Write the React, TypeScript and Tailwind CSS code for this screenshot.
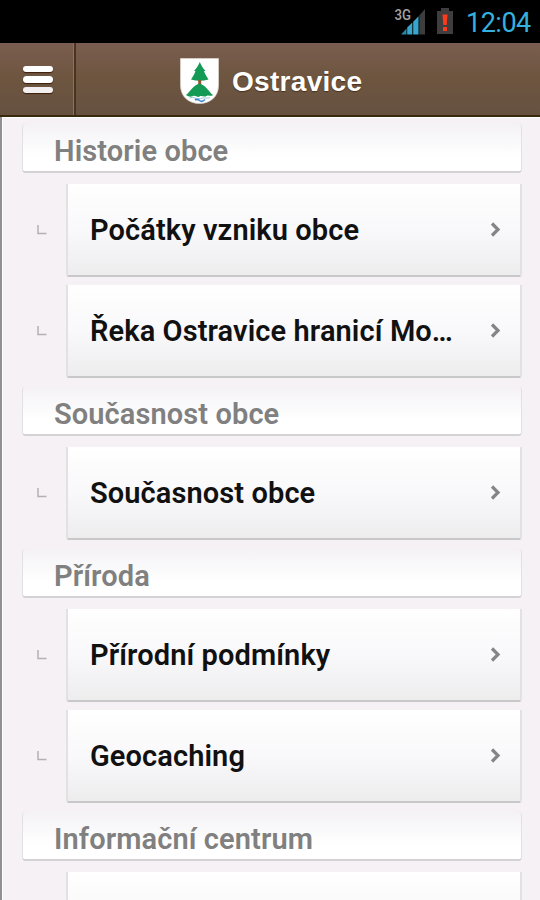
type Section = { title: string; items: string[] };

const sections: Section[] = [
  { title: "Historie obce", items: ["Počátky vzniku obce", "Řeka Ostravice hranicí Mo…"] },
  { title: "Současnost obce", items: ["Současnost obce"] },
  { title: "Příroda", items: ["Přírodní podmínky", "Geocaching"] },
  { title: "Informační centrum", items: [""] },
];

function StatusBar() {
  return (
    <div className="flex h-[43px] shrink-0 items-start justify-end bg-black pr-[9px]">
      <svg className="mt-[7px] h-[29px] w-[34px]" viewBox="0 0 34 29">
        <text x="0.5" y="12.5" fontSize="15" fontWeight="500" textLength="16.5" lengthAdjust="spacingAndGlyphs" fill="#a3a3a3" className="font-['Roboto',sans-serif]">3G</text>
        <path d="M7 27.5 12.5 21.5V27.5Z" fill="#2786a8" />
        <path d="M13.2 20.5 18.3 15.5V27.5H13.2Z" fill="#38a5cc" />
        <path d="M19.2 14.7 24.5 9.3V27.5H19.2Z" fill="#38a5cc" />
        <path d="M25.3 8.5 31 2V27.5H25.3Z" fill="#3d3d3d" />
      </svg>
      <svg className="ml-[8px] mt-[7px] h-[28px] w-[18px]" viewBox="0 0 18 28">
        <path d="M5 1H13V4H17V27H1V4H5Z" fill="#3f3d3d" />
        <path d="M6.5 7.5H11.5L10.7 18H7.3ZM7 20H11V24H7Z" fill="#fa3b1d" />
      </svg>
      <span className="ml-[12px] mt-[5px] w-[65px] whitespace-nowrap font-['Roboto',sans-serif] text-[27px] leading-[37px] tracking-[-0.5px] text-[#35b1df]">12:04</span>
    </div>
  );
}

function Crest() {
  return (
    <svg className="h-[47px] w-[40px]" viewBox="0 0 40 47">
      <path d="M.5.5H38.5V27C38.5 39 30 45.5 19.5 45.5S.5 39 .5 27Z" fill="#fff" stroke="#dad2cc" strokeWidth=".8" />
      <path d="M19.8 4C21.5 8 23 10 25.5 13H24C25 16 26.5 18.5 28.5 21.5Q20 24 11 21.5C13 18.5 14.5 16 15.5 13H14C16.5 10 18 8 19.8 4Z" fill="#149a55" />
      <path d="M18.2 22H21.2V28H18.2Z" fill="#8a5635" />
      <path d="M6 37C11 33 14 26 19.5 26S28 33 33 37C30.5 39 29 36.5 26.5 38S21.5 37 19.5 38.5 15.5 37 13 38 9 39 6 37Z" fill="#149a55" />
      <path d="M9.5 40Q12.5 38.5 15 40T20.5 40.5 26 40 30 39.5" fill="none" stroke="#9bc5df" strokeWidth="1" />
      <path d="M15 42Q17 40.5 19.5 42.5T25 41.5" fill="none" stroke="#3c85cb" strokeWidth="1.6" />
    </svg>
  );
}

function Header() {
  return (
    <header className="flex h-[74px] shrink-0 border-b-2 border-[#3a2a0d] bg-linear-to-b from-[#7a5d4f] via-[#6d553f] to-[#665141]">
      <button className="flex w-[76px] items-center justify-center border-r-2 border-[#49341f] pl-[2px] pt-px shadow-[inset_-1px_0_0_#8b735d]">
        <span className="flex flex-col gap-[4px]">
          <span className="h-[6.5px] w-[30px] rounded-full bg-white shadow-[0_1px_1px_#3d1e08]" />
          <span className="h-[6.5px] w-[30px] rounded-full bg-white shadow-[0_1px_1px_#3d1e08]" />
          <span className="h-[6.5px] w-[30px] rounded-full bg-[#f3eff0] shadow-[0_1px_1px_#3d1e08]" />
        </span>
      </button>
      <div className="flex items-start pl-[104px] pt-[15px]">
        <Crest />
        <h1 className="ml-[12px] mt-[8px] whitespace-nowrap font-['Liberation_Sans',sans-serif] text-[28px] font-bold leading-[32px] tracking-[0.3px] text-white [text-shadow:0_1px_1px_#49301c]">Ostravice</h1>
      </div>
    </header>
  );
}

function Item({ label }: { label: string }) {
  return (
    <li className="flex h-[101px] items-start">
      <svg className="ml-[35px] mt-[41px] h-[10px] w-[10px] shrink-0" viewBox="0 0 10 10">
        <path d="M1 0V8.5H9.5" fill="none" stroke="#b4b1b3" strokeWidth="1.5" />
      </svg>
      <div className="ml-[19px] flex h-[93px] w-[456px] items-center rounded-b-[3px] border-x-2 border-b-2 border-x-[#e3e1e4] border-b-[#c9c8c9] bg-linear-to-b from-white via-[#f9f8fa] to-[#eeedee] pl-[22px] pr-[18px]">
        <span className="whitespace-nowrap font-['Roboto',sans-serif] text-[29px] font-semibold leading-[40px] tracking-[0.1px] text-[#111]">{label}</span>
        <svg className="ml-auto h-[16px] w-[12px]" viewBox="0 0 12 16">
          <path d="M2 1.5 8 7.5 2 13.5" fill="none" stroke="#858585" strokeWidth="3.2" />
        </svg>
      </div>
    </li>
  );
}

export default function App() {
  return (
    <div className="flex h-[900px] w-[540px] flex-col overflow-hidden bg-black">
      <StatusBar />
      <Header />
      <main className="min-h-0 flex-1 overflow-hidden border-l-2 border-[#929093] bg-[#f5f1f5] pt-[7px] shadow-[inset_1px_1px_0_#fff]">
        {sections.map((s) => (
          <section key={s.title}>
            <div className="mb-[11px] ml-[20px] flex h-[49px] w-[500px] items-center rounded-[4px] border-x border-b-2 border-x-[#e2e0e3] border-b-[#d4d2d5] bg-linear-to-b from-[#f4f2f5] to-white to-70% pl-[31px]">
              <h2 className="mt-[6px] whitespace-nowrap font-['Roboto',sans-serif] text-[29px] font-semibold leading-[40px] tracking-[0.1px] text-[#808080]">{s.title}</h2>
            </div>
            <ul className="pb-px">
              {s.items.map((i) => <Item key={i} label={i} />)}
            </ul>
          </section>
        ))}
      </main>
    </div>
  );
}
